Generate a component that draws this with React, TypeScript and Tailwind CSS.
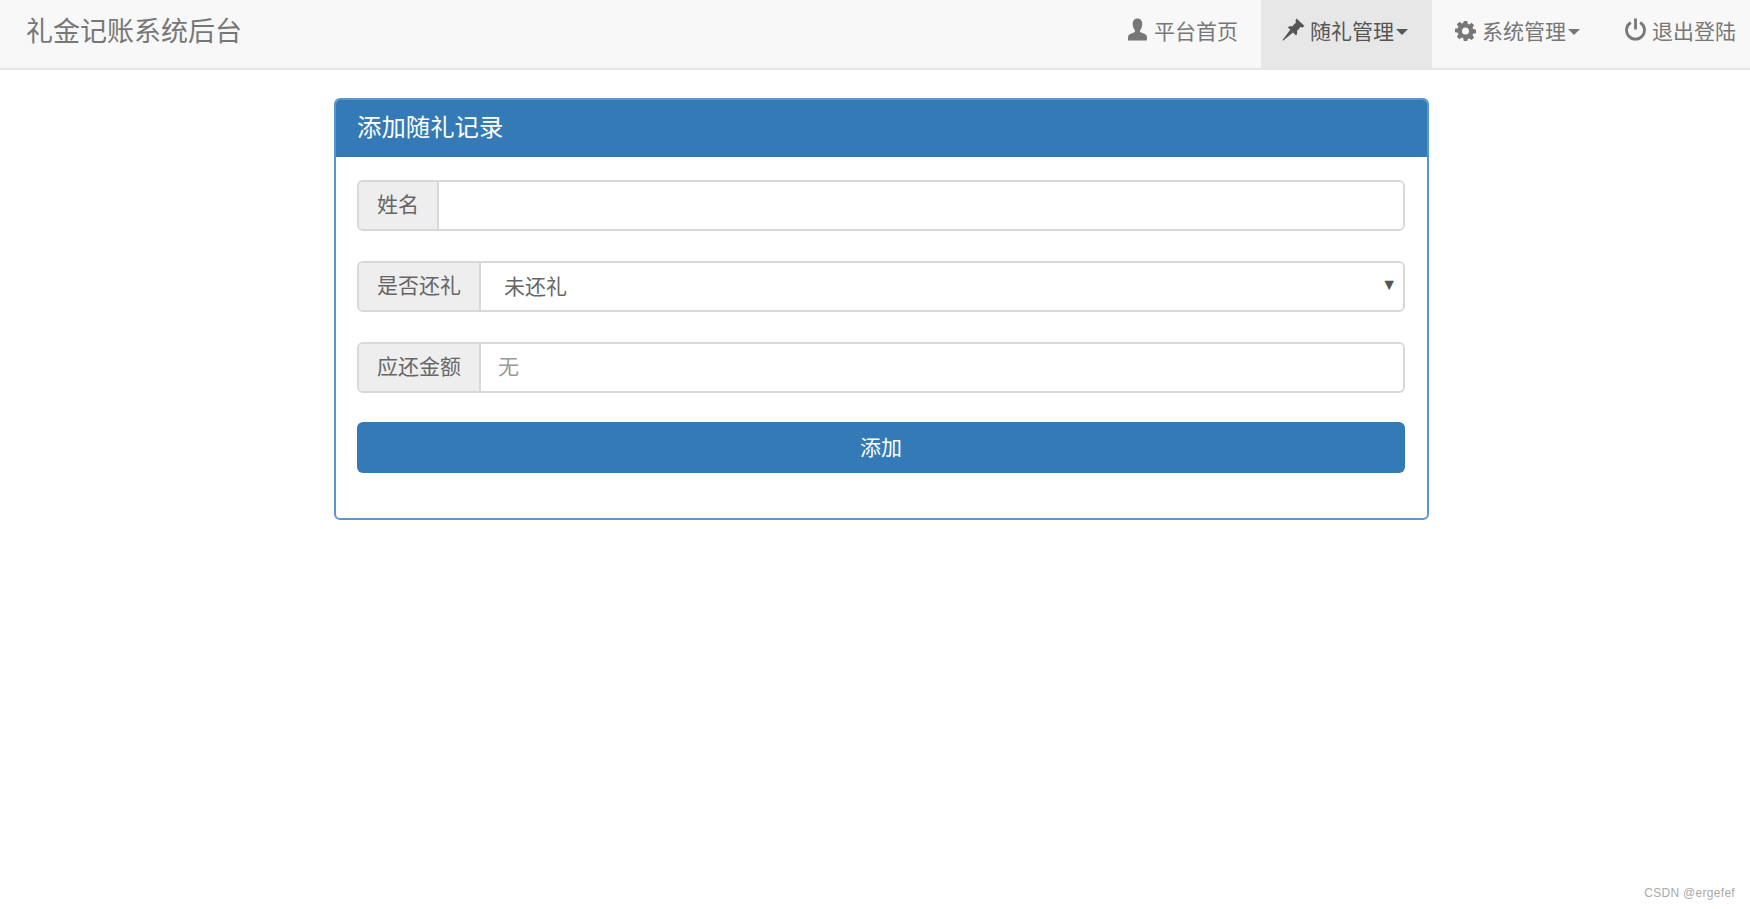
const font = { fontFamily: '"Liberation Sans", "Noto Sans CJK SC", sans-serif' };

function UserIcon() {
  return (
    <svg viewBox="0 0 20 23" className="w-[21px] h-[23px] mr-[6px] -mt-[5px]" fill="currentColor">
      <path d="M10 .5c-3 0-4.800 2.200-4.800 5.500 0 2.400.8 4.600 2 6 .6.800.4 1.700-.3 2.200-1.100.800-4.700 1.500-5.700 2.800-.6.800-.7 3-.7 5.500h19c0-2.500-.1-4.700-.7-5.500-1-1.300-4.600-2-5.700-2.800-.7-.5-.9-1.400-.3-2.200 1.200-1.400 2-3.600 2-6 0-3.300-1.800-5.500-4.800-5.500z" />
    </svg>
  );
}

function PinIcon() {
  return (
    <svg viewBox="0 0 23 23" className="w-[23px] h-[23px] mr-[5px] -mt-[5px]" fill="currentColor">
      <path d="M14.500.5 22.500 8l-2 1.500-2-.5-3.500 4c.5 2 0 3.500-1 4.500L5.800 9.200c1-1 2.700-1.400 4.200-.7l4-4-.5-2z" />
      <path d="M8.500 11.500 11 14.500 1 22.800l-.5-.8z" />
    </svg>
  );
}

function GearIcon() {
  return (
    <svg viewBox="0 0 24 24" className="w-[21px] h-[21px] mr-[6px] -mt-[3px]" fill="currentColor">
      <path fillRule="evenodd" d="M10 1h4l.6 3.300 1.700.7L19 3.100 21.900 6 20 8.700l.7 1.700 3.300.6v4l-3.300.6-.7 1.700 1.900 2.700-2.900 2.900-2.700-1.900-1.700.7L14 24h-4l-.6-3.300-1.700-.7L5 21.900 2.100 19 4 16.300l-.7-1.700L0 14v-4l3.300-.6L4 7.700 2.100 5 5 2.100 7.700 4l1.700-.7zM12 8.500a4 4 0 1 0 0 8 4 4 0 0 0 0-8z" />
    </svg>
  );
}

function PowerIcon() {
  return (
    <svg viewBox="0 0 21 23" className="w-[21px] h-[23px] mr-[6px] -mt-[5px]" fill="none" stroke="currentColor" strokeWidth="2.800">
      <path d="M10.500 .5v11" />
      <path d="M5.800 4.500a9 9 0 1 0 9.400 0" />
    </svg>
  );
}

function Caret() {
  return <span className="ml-[2px] w-0 h-0 border-x-[6px] border-x-transparent border-t-[6px] border-t-current" />;
}

function InputRow({ label, children, addonWidth }: { label: string; children: React.ReactNode; addonWidth: string }) {
  return (
    <div className="flex h-[51px] border-2 border-[#d8d8d8] rounded-[6px] overflow-hidden">
      <span className={`${addonWidth} shrink-0 flex items-center justify-center pb-[2px] bg-[#eeeeee] border-r-2 border-[#d8d8d8] text-[21px] text-[#666]`}>
        {label}
      </span>
      {children}
    </div>
  );
}

export default function App() {
  return (
    <div className="relative min-h-screen bg-white" style={font}>
      <nav className="flex items-center justify-between h-[70px] bg-[#f8f8f8] border-b-2 border-[#e7e7e7]">
        <a className="pl-[26px] pb-[4px] text-[27px] text-[#777]">礼金记账系统后台</a>
        <ul className="flex h-full text-[21px] text-[#777] pr-[14px]">
          <li className="flex items-center pb-[5px] pr-[23px]">
            <UserIcon />
            <span>平台首页</span>
          </li>
          <li className="flex items-center pb-[5px] pl-[21px] pr-[24px] bg-[#e7e7e7] text-[#555]">
            <PinIcon />
            <span>随礼管理</span>
            <Caret />
          </li>
          <li className="flex items-center pb-[5px] pl-[23px] pr-[22px]">
            <GearIcon />
            <span>系统管理</span>
            <Caret />
          </li>
          <li className="flex items-center pb-[5px] pl-[23px]">
            <PowerIcon />
            <span>退出登陆</span>
          </li>
        </ul>
      </nav>

      <div className="ml-[334px] mt-[28px] w-[1095px] h-[422px] border-2 border-[#5b97cf] rounded-[6px] overflow-hidden">
        <div className="flex items-center h-[57px] px-[21px] bg-[#337ab7] text-white text-[24.4px]">
          添加随礼记录
        </div>
        <form className="flex flex-col gap-[30px] pt-[23px] pl-[21px] pr-[22px]">
          <InputRow label="姓名" addonWidth="w-[80px]">
            <input className="flex-1 px-[16px] bg-white text-[21px] outline-none" />
          </InputRow>
          <InputRow label="是否还礼" addonWidth="w-[122px]">
            <div className="relative flex-1">
              <select className="w-full h-full appearance-none pl-[23px] bg-white text-[21px] text-[#666] outline-none">
                <option>未还礼</option>
              </select>
              <span className="absolute right-[6px] top-[10px] text-[16px] text-[#555]">▼</span>
            </div>
          </InputRow>
          <InputRow label="应还金额" addonWidth="w-[122px]">
            <input placeholder="无" className="flex-1 px-[17px] pb-[2px] bg-white text-[21px] outline-none placeholder:text-[#999]" />
          </InputRow>
          <button type="button" className="h-[51px] -mt-[1px] bg-[#337ab7] rounded-[6px] text-white text-[21px]">
            添加
          </button>
        </form>
      </div>

      <span className="absolute right-[15px] top-[884px] text-[12px] tracking-[0.3px] text-[#aaaaaa]">CSDN @ergefef</span>
    </div>
  );
}
